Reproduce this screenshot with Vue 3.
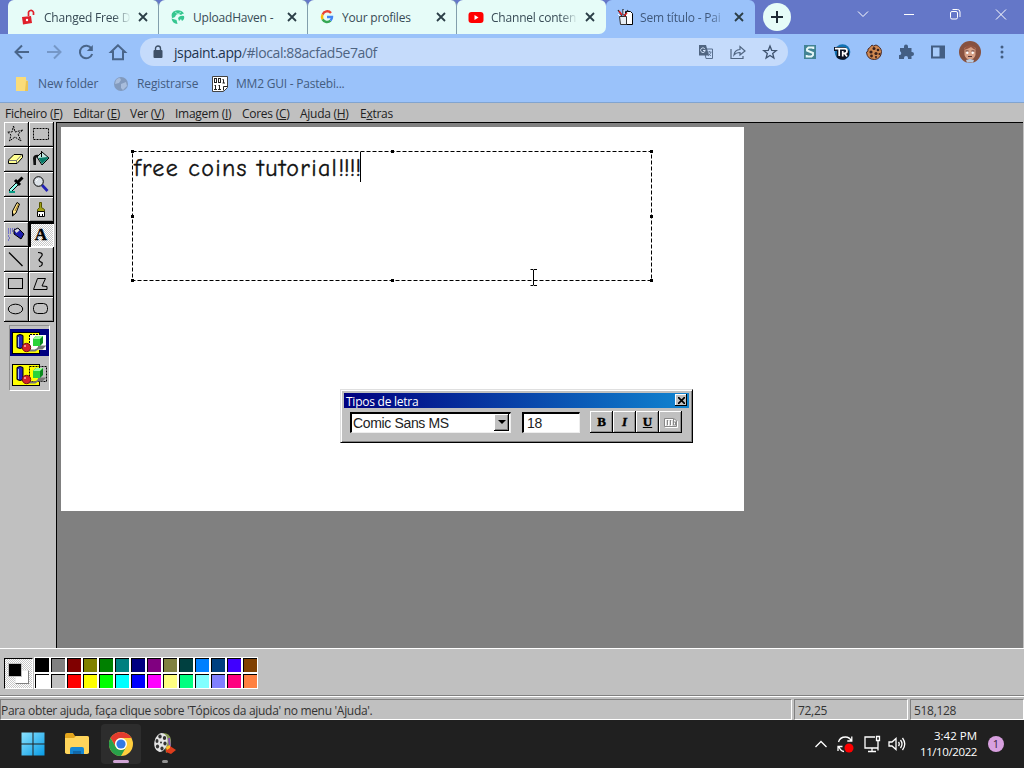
<template>
    <div class="desktop">
        <div class="tabstrip">
            <div class="tabs">
                <div v-for="(tab, i) in tabs" :key="tab.title" class="tab"
                    :class="{ active: i === 4, first: i === 0, last: i === 3 }">
                    <svg class="favicon" viewBox="0 0 16 16" v-html="tab.icon"></svg>
                    <span class="tab-title" :class="{ fade: tab.fade }">{{ tab.title }}</span>
                    <svg class="tab-close" viewBox="0 0 10 10">
                        <path d="M1 1l8 8M9 1L1 9" />
                    </svg>
                </div>
            </div>
            <button class="new-tab">
                <svg width="14" height="14" viewBox="0 0 14 14">
                    <path d="M7 1v12M1 7h12" stroke="#1d2b35" stroke-width="2" />
                </svg>
            </button>
            <div class="window-buttons">
                <svg viewBox="0 0 46 28"><path d="M18 11.5l5 5 5-5" /></svg>
                <svg viewBox="0 0 46 28"><path d="M18 14.5h10" /></svg>
                <svg viewBox="0 0 46 28">
                    <rect x="18.5" y="11.5" width="7" height="7.5" rx="1.5" />
                    <path d="M20.5 9.5h5q2.500 0 2.500 2.500v5" />
                </svg>
                <svg viewBox="0 0 46 28"><path d="M18 9.500l10 10M28 9.500l-10 10" /></svg>
            </div>
        </div>

        <div class="toolbar">
            <div class="nav">
                <svg viewBox="0 0 20 20"><path d="M17 10H4M10 3.500L3.500 10l6.500 6.500" /></svg>
                <svg class="dim" viewBox="0 0 20 20"><path d="M3 10h13M10 3.500l6.500 6.500-6.500 6.500" /></svg>
                <svg viewBox="0 0 20 20">
                    <path d="M15.500 6.500A6.300 6.300 0 1 0 16.200 12" />
                    <path d="M16.800 3v6h-6z" fill="#49658a" stroke="none" />
                </svg>
                <svg viewBox="0 0 20 20"><path d="M10 3.300L3 10h2v7.200h10V10h2z" stroke-linejoin="miter" /></svg>
            </div>
            <div class="address">
                <svg class="lock" viewBox="0 0 10 14">
                    <rect x="0.500" y="5" width="9" height="8" rx="1" fill="#3e5067" />
                    <path d="M2.500 5V3.500a2.500 2.500 0 0 1 5 0V5" fill="none" stroke="#3e5067" stroke-width="1.400" />
                </svg>
                <span class="url"><b>jspaint.app</b>/#local:88acfad5e7a0f</span>
                <svg class="addr-icon" viewBox="0 0 16 16">
                    <path d="M6 5h8.500v9.500H8z" fill="none" stroke="#596f8e" />
                    <path d="M1 1h7l3 10.500H1z" fill="#506581" />
                    <path d="M7 5.200A2.300 2.300 0 1 0 7.200 6.500H5" fill="none" stroke="#d7e6fc" />
                    <path d="M9.500 8h4M11.500 7v1M13 8q-.5 2.500-3 4M10.500 9.500l2.500 2.500" fill="none" stroke="#596f8e" stroke-width=".8" />
                </svg>
                <svg class="addr-icon" viewBox="0 0 16 16">
                    <path d="M1 5v9.500h12V12M4 11q.5-5 6-5.500V2.500l5 4.500-5 4V8.500Q6 8.500 4 11z" fill="none" stroke="#506581" stroke-width="1.200" />
                </svg>
                <svg class="addr-icon" viewBox="0 0 16 16">
                    <path d="M8 2l1.700 4.300 4.600.3-3.600 2.900 1.200 4.500L8 11.500 4.100 14l1.200-4.500-3.600-2.900 4.600-.3z" fill="none" stroke="#3f536f" stroke-width="1.300" />
                </svg>
            </div>
            <div class="extensions">
                <svg viewBox="0 0 18 18">
                    <rect x="3" y="2" width="12" height="14" fill="#428394" />
                    <path d="M12.300 6V4.500H7.500L6 6v1.500L12 10v2l-1.500 1.500H5.700V12" fill="none" stroke="#e7f7f7" stroke-width="1.900" />
                </svg>
                <svg viewBox="0 0 18 18">
                    <circle cx="9.500" cy="9" r="7.800" fill="#1272b4" />
                    <path d="M1 4h11l4 4v5l-4 3.500Q6 17.500 3.500 14L4 8H1z" fill="#0d1424" />
                    <path d="M2 5.700h9.500q2.500 0 2.500 2.300t-2.500 2.300H10M6.200 6v7M9.700 8v5.500M11.500 10.300l2.500 3.200" fill="none" stroke="#fff" stroke-width="1.700" />
                </svg>
                <svg viewBox="0 0 18 18">
                    <path d="M7 2q1 2 4 0 5 2 5.500 6.500Q16 16 9.500 16.500 2 16.500 1.500 9q2 0 1.500-3 2-1 4-4z" fill="#cf8850" stroke="#4b2922" />
                    <g fill="#3a211e"><circle cx="9" cy="5.500" r="1.500" /><circle cx="13" cy="7" r="1.300" /><circle cx="6" cy="9" r="1.600" /><circle cx="11" cy="10.500" r="1.600" /><circle cx="6.500" cy="13" r="1.400" /><circle cx="11" cy="14" r="1.100" /><circle cx="14.500" cy="11" r="1.100" /></g>
                </svg>
                <svg viewBox="0 0 18 18">
                    <path d="M3 5h4V3.500a2 2 0 0 1 4 0V5h3.500v4h.5a2 2 0 0 1 0 4h-.5v3H11v-1a2 2 0 0 0-4 0v1H2v-4h1a2 2 0 0 0 0-3.700z" fill="#435e83" />
                </svg>
                <svg viewBox="0 0 18 18">
                    <path d="M2 2.500h14v13H2z" fill="#435e83" /><path d="M4 4.500h6.500v9H4z" fill="#a7cbfa" />
                </svg>
                <svg class="avatar" viewBox="0 0 22 22">
                    <circle cx="11" cy="11" r="11" fill="#87513f" />
                    <path d="M5.500 7q5.500-4 11 0v7q-1 4-5.500 5-4.500-1-5.500-5z" fill="#d7a187" />
                    <path d="M5 9q1-4 6-5 5 1 6 5-3-1-5-3-3 2-7 3z" fill="#965540" />
                    <path d="M6.500 10h3M12.500 10h3M9 15.500h4" stroke="#523132" /><circle cx="8.300" cy="11.700" r="1.200" fill="#fff" /><circle cx="13.700" cy="11.700" r="1.200" fill="#fff" />
                    <path d="M7 19l4-1 4 1-1 2.500H8z" fill="#b7cce4" />
                </svg>
                <svg viewBox="0 0 18 18"><g fill="#435e83"><circle cx="9" cy="4" r="1.500" /><circle cx="9" cy="9" r="1.500" /><circle cx="9" cy="14" r="1.500" /></g></svg>
            </div>
        </div>

        <div class="bookmarks">
            <div class="bookmark b1">
                <svg viewBox="0 0 16 16"><path d="M2 1h10v3l2 1v10H2z" fill="#fadc79" /><path d="M12 5h2v10h-3z" fill="#eac354" /></svg>
                <span>New folder</span>
            </div>
            <div class="bookmark b2">
                <svg viewBox="0 0 16 16"><circle cx="8" cy="8" r="7" fill="#829abd" /><path d="M3 4q4-4 5 0l-2 3-4 1zM8 8l5-2 1 4-4 4-2-2z" fill="#a8bddc" /></svg>
                <span>Registrarse</span>
            </div>
            <div class="bookmark b3">
                <svg viewBox="0 0 16 16">
                    <path d="M.5.500h15v11l-4 4H.5z" fill="#fff" stroke="#444" />
                    <g fill="none" stroke="#222"><rect x="2.500" y="2.500" width="2" height="4" /><rect x="6.500" y="2.500" width="2" height="4" /><path d="M10.500 3.500h1v3.500M3.500 9v4.500M7.500 9v4.500M2.500 9.500h1M6.500 9.500h1M2 13.500h3M6 13.500h3M10.500 7h2.500M11.500 14.500v-4h4" /></g>
                </svg>
                <span>MM2 GUI - Pastebi...</span>
            </div>
        </div>

        <div class="menubar">
            <span v-for="m in menus" :key="m[1] + m[0]" :class="m[3]">{{ m[0] }}<u>{{ m[1] }}</u>{{ m[2] }}</span>
        </div>

        <div class="workspace">
            <div class="toolbox">
                <div class="tools">
                    <div v-for="(tool, i) in tools" :key="i" class="tool" :class="{ selected: i === 9 }">
                        <svg width="25" height="25" viewBox="0 0 25 25" v-html="tool"></svg>
                    </div>
                </div>
                <div class="options">
                    <div v-for="n in 2" :key="n" class="option" :class="{ chosen: n === 1 }">
                        <svg width="39" height="27" viewBox="0 0 39 27">
                            <rect x="2.500" y="3.500" width="27" height="21" fill="#ff0" stroke="#000" />
                            <rect v-if="n === 1" x="20" y="6" width="16" height="15" fill="#fff" />
                            <path d="M19.500 5.500h17v15h-17z" fill="none" stroke="#000" stroke-dasharray="2 1" v-if="n === 2" />
                            <path d="M19.500 20V5.500H29" fill="none" stroke="#000" stroke-dasharray="2 1" v-else />
                            <path d="M7 6.500q3-2 6 0v12q-3 2-6 0z" fill="#22b" stroke="#000" /><path d="M8.500 8v10" stroke="#9bf" />
                            <path d="M17 21.500h8l3-2M28 17.500h6l-2 2h-5" fill="none" stroke="#777" stroke-width="2" />
                            <circle cx="16.500" cy="18.500" r="4.200" fill="#d3222b" stroke="#711" /><circle cx="15" cy="17" r="1" fill="#fbb" />
                            <path d="M23 10l3-3h7v7l-3 3h-7z" fill="#098b1e" /><path d="M23 10h7v7h-7z" fill="#2bd33a" />
                            <path d="M23 10l3-3h7l-3 3z" fill="#9f9" />
                        </svg>
                    </div>
                </div>
            </div>
            <div class="canvas-area">
                <div class="canvas">
                    <div class="textbox">
                        <svg width="521" height="131" viewBox="0 0 521 131">
                            <rect x=".5" y=".5" width="519" height="129" fill="none" stroke="#000" stroke-dasharray="4 2" />
                            <rect v-for="(h, i) in handles" :key="i" :x="h[0]" :y="h[1]" width="3" height="3" />
                        </svg>
                        <span class="typed">free coins tutorial<span class="bangs">!!!!</span></span>
                        <i class="caret"></i>
                    </div>
                    <svg class="pointer" width="8" height="17" viewBox="0 0 8 17">
                        <path d="M.5.500h2.500l.5 1 .5-1H7M3.500 1v15M.5 16.500H3l.5-1 .5 1h3" fill="none" stroke="#000" />
                    </svg>
                </div>
                <div class="font-window">
                    <div class="titlebar">
                        <span>Tipos de letra</span>
                        <button><svg width="7" height="7" viewBox="0 0 7 7"><path d="M0 0l7 7M7 0L0 7" stroke="#000" stroke-width="1.700" /></svg></button>
                    </div>
                    <div class="font-row">
                        <div class="field family"><span>Comic Sans MS</span>
                            <i class="drop"><svg width="8" height="4" viewBox="0 0 8 4"><path d="M0 0h8L4 4z" /></svg></i>
                        </div>
                        <div class="field size">18</div>
                        <div class="styles">
                            <button><b>B</b></button>
                            <button><b class="ital">I</b></button>
                            <button><b class="under">U</b></button>
                            <button><svg width="15" height="11" viewBox="0 0 15 11"><path d="M1.500 9.500v-8h9l3 2v6zM4.500 3v5M7.500 3v5M10.500 2v6h2V5h-2" fill="#ddd" stroke="#fff" transform="translate(1 1)" /><path d="M1.500 9.500v-8h9l3 2v6zM4.500 3v5M7.500 3v5M10.500 2v6h2V5h-2" fill="none" stroke="#888" /></svg></button>
                        </div>
                    </div>
                </div>
            </div>
        </div>

        <div class="colorbar">
            <div class="current"><i class="back"></i><i class="fore"></i></div>
            <div class="palette">
                <i v-for="c in colors" :key="c" class="swatch" :style="{ backgroundColor: c }"></i>
            </div>
        </div>

        <div class="status">
            <div class="help"><span>Para obter ajuda, faça clique sobre 'Tópicos da ajuda' no menu 'Ajuda'.</span></div>
            <div class="pos">72,25</div>
            <div class="dims">518,128</div>
        </div>

        <div class="taskbar">
            <div class="pins">
                <div class="pin">
                    <svg width="24" height="24" viewBox="0 0 24 24">
                        <defs><linearGradient id="win" x2="1" y2="1"><stop stop-color="#8be2ff" /><stop offset="1" stop-color="#079be5" /></linearGradient></defs>
                        <path d="M.5.500h11v11H.5zM12.500.500h11v11h-11zM.5 12.500h11v11H.5zM12.500 12.500h11v11h-11z" fill="url(#win)" />
                    </svg>
                </div>
                <div class="pin">
                    <svg width="26" height="24" viewBox="0 0 26 24">
                        <path d="M1 3q0-2 2-2h6l2 3h12q2 0 2 2v15H1z" fill="#e3a51c" /><path d="M1 6h9l2-2h11q2 0 2 2v14q0 2-2 2H3q-2 0-2-2z" fill="#ffd55b" />
                        <path d="M6 22v-5q0-2 2-2h10q2 0 2 2v5z" fill="#1587d3" /><path d="M9 19h8v3H9z" fill="#1268a8" />
                    </svg>
                </div>
                <div class="pin running">
                    <svg width="24" height="24" viewBox="0 0 24 24">
                        <circle cx="12" cy="12" r="12" fill="#ffce3d" />
                        <path d="M1.600 6A12 12 0 0 1 22.400 6H12a6 6 0 0 0-5.200 9z" fill="#e33b2e" />
                        <path d="M1.600 6A12 12 0 0 0 12 24l5.200-9A6 6 0 0 1 6.800 15z" fill="#28a04a" />
                        <circle cx="12" cy="12" r="6" fill="#fff" /><circle cx="12" cy="12" r="4.600" fill="#3379e5" />
                    </svg>
                    <i class="mark"></i>
                </div>
                <div class="pin">
                    <svg width="24" height="24" viewBox="0 0 24 24">
                        <path d="M10 1q7 0 8 7v9l-5 4z" fill="#899c55" /><path d="M16 6l1 10" stroke="#8652b6" stroke-width="2" />
                        <ellipse cx="8" cy="10.500" rx="6.500" ry="9.500" fill="#e5e5e5" transform="rotate(12 8 10)" />
                        <g fill="#333"><ellipse cx="7" cy="4.500" rx="1.700" ry="2" /><ellipse cx="11.500" cy="6" rx="1.700" ry="2" /><ellipse cx="4" cy="9" rx="1.500" ry="2" /><ellipse cx="12" cy="11.500" rx="1.600" ry="2" /><ellipse cx="4.500" cy="14.500" rx="1.600" ry="2" /><ellipse cx="9" cy="16.500" rx="1.600" ry="2" /><circle cx="8" cy="10.500" r="1" /></g>
                        <path d="M13 17l4-3 6 4-5 4-5-2z" fill="#df3d1c" /><path d="M13 15l4-2v3l-3 2z" fill="#ffbd29" />
                    </svg>
                    <i class="mark small"></i>
                </div>
            </div>
            <div class="tray">
                <svg width="14" height="24" viewBox="0 0 14 24"><path d="M1.500 15L7 9.500l5.500 5.500" /></svg>
                <svg width="17" height="18" viewBox="0 0 17 18">
                    <path d="M1.500 7Q3 2 8.500 2q4 0 6 4M14.800 1.500V6h-4.500M1 16v-4.500h4.500M2 12q2 4.500 5 4.500" />
                    <circle cx="12" cy="13" r="4.500" fill="#f00" stroke="none" />
                </svg>
                <svg width="17" height="18" viewBox="0 0 17 18"><path d="M11 2H1v11h12.500M8 13v3M4 16.500h8M12.500 1.500h3v4h-3zM14 5.500v10" /></svg>
                <svg width="18" height="18" viewBox="0 0 18 18"><path d="M1 7v4h3l4 3.500v-11L4 7zM10.500 7q1.500 2 0 4M12.500 5q3 4 0 8M14.500 3q4.500 6 0 12" /></svg>
                <div class="clock"><span class="time">3:42 PM</span><span>11/10/2022</span></div>
                <div class="badge">1</div>
            </div>
        </div>
    </div>
</template>

<script setup>
const tabs = [
    {
        title: 'Changed Free D', fade: true,
        icon: '<path d="M1 8l9-1 1 7-9 1.500z" fill="#e0202b"/><path d="M7.500 7V4.500a2.500 2.500 0 0 1 5-1V6" fill="none" stroke="#e0202b" stroke-width="1.700"/><circle cx="6" cy="11" r="1.200" fill="#fff"/>',
    },
    {
        title: 'UploadHaven -',
        icon: '<path d="M2 9Q0 3 6 1.500q5-1 8 3-2 0-3 1.500-3-2-5 0-1 3-4 3zM1.500 9.500q1 5 6 5.500l-1-4zM8 9q2-3 6-2 1 3-2 5l-1-2-2 2zM9 14l3-1" fill="#35c690"/><path d="M5 3l3 2 3-2" fill="none" stroke="#96edcb"/>',
    },
    {
        title: 'Your profiles',
        icon: '<g fill="none" stroke-width="2.400"><path d="M12 4A5 5 0 0 0 3.600 5.600" stroke="#e94235"/><path d="M3.600 5.600a5 5 0 0 0 0 4.800" stroke="#fabb05"/><path d="M3.600 10.400A5 5 0 0 0 11.500 11.600" stroke="#34a853"/><path d="M11.500 11.600A5 5 0 0 0 13 8H8" stroke="#4285f4"/></g>',
    },
    {
        title: 'Channel conten', fade: true,
        icon: '<rect x=".5" y="3" width="15" height="11" rx="3" fill="#f00"/><path d="M6.500 6l4 2.500-4 2.500z" fill="#fff"/>',
    },
    {
        title: 'Sem título - Pai', fade: true,
        icon: '<path d="M8.500 2.500h5l2 2v11h-7z" fill="#fff" stroke="#000"/><path d="M2.500 7.500h7v8h-6z" fill="#e8eef4" stroke="#333"/><path d="M1 1l4 6M6 0v6M11 1L7 7" stroke="#222" stroke-width="1.200"/><path d="M2 2l3 4M10 4L7 7" fill="none" stroke="#d22" stroke-width="1.500"/><path d="M7 1v4M1 5l2 2" stroke="#fff"/>',
    },
]

const menus = [
    ['Ficheiro (', 'F', ')', 'm1'],
    ['Editar (', 'E', ')', 'm2'],
    ['Ver (', 'V', ')', 'm3'],
    ['Imagem (', 'I', ')', 'm4'],
    ['Cores (', 'C', ')', 'm5'],
    ['Ajuda (', 'H', ')', 'm6'],
    ['E', 'x', 'tras', 'm7'],
]

const line = 'fill="none" stroke="#000"'

// two columns, top to bottom
const tools = [
    `<path d="M9.500 4l1.500 6 8-2-5 4 3 7-6-4-5.500 4L7 13l-3.500-3H8z" ${line} stroke-dasharray="2 1"/>`,
    `<rect x="4.500" y="6.500" width="15" height="11" ${line} stroke-dasharray="2 1"/>`,
    '<path d="M4.500 13l5.500-5.500h8.500v3L13 16.500H4.500z" fill="#ffff91" stroke="#000"/><path d="M4.500 13.500h8l5.500-6M12.500 13v3" fill="none" stroke="#777"/>',
    '<path d="M8 10l5-5 7 6-7 7z" fill="#bfe5df" stroke="#000"/><path d="M9.500 11l9-1 1 1-6.500 6z" fill="#087b68"/><path d="M12.500 4v6" stroke="#000"/><path d="M4 11q1-4 6-3l-3 3v7H4.500z" fill="#111"/>',
    '<path d="M5.500 19.500v-2l7-7 2 2-7 7z" fill="#91fff0" stroke="#000"/><path d="M11 8l5 5M13.500 10.500l5-5" stroke="#000" stroke-width="3"/><path d="M5 20h6" stroke="#079b83" stroke-width="2"/>',
    '<path d="M13 13l5.500 6" stroke="#2222b5" stroke-width="2.700"/><circle cx="9.500" cy="9.500" r="4.800" fill="#dce2e8" stroke="#000"/><path d="M7 9l2-2" stroke="#fff"/>',
    '<path d="M8.500 14L13 5.500l2.500 1.500-3.500 9-3.500 3z" fill="#ffe58d" stroke="#000"/><path d="M8.500 16l1.500 1-1.500 2z" fill="#000"/><path d="M11 14l3.500-7" stroke="#9d7926"/>',
    '<path d="M10.500 5.500h2v5l3 2v2h-7v-2l2-2z" fill="#a0a018" stroke="#555500"/><path d="M8.500 14.500h7v5h-7z" fill="#fff" stroke="#000"/><path d="M10.500 17v2M13.500 17v2" stroke="#000"/>',
    '<path d="M4 7h7M4 9h6M4 11h3M4 14h2M5 16h1M4 18h1" stroke="#2525d0" stroke-dasharray="1 1"/><path d="M10 8l4-2 6 6-3 5-7-5z" fill="#1d1dac" stroke="#000"/><path d="M10.500 8.500l3.500-2 1.500 2-3 2.500z" fill="#ddd"/>',
    '<text x="12" y="18" text-anchor="middle" font-family="Liberation Serif, serif" font-size="17" font-weight="700" stroke="#000" stroke-width=".4">A</text>',
    `<path d="M5 5.500L18.500 19" ${line} stroke-width="1.300"/>`,
    `<path d="M9 5.500q5 0 4 3-1 1.500-3 4 0 2 3 3 1 3.500-3 4" ${line} stroke-width="1.200"/>`,
    `<rect x="4.500" y="6.500" width="14" height="10" ${line}/>`,
    `<path d="M8.500 6.500h8L13 14l5 .5v3H4.500z" ${line}/>`,
    `<ellipse cx="11.500" cy="12" rx="7.200" ry="4.800" ${line}/>`,
    `<rect x="4.500" y="6.500" width="14" height="10" rx="4" ${line}/>`,
]

const handles = [[-1, -1], [259, -1], [518, -1], [-1, 64], [518, 64], [-1, 128], [259, 128], [518, 128]]

const colors = [
    '#000000', '#808080', '#800000', '#808000', '#008000', '#008080', '#000080',
    '#800080', '#808040', '#004040', '#0080ff', '#004080', '#4000ff', '#804000',
    '#ffffff', '#c0c0c0', '#ff0000', '#ffff00', '#00ff00', '#00ffff', '#0000ff',
    '#ff00ff', '#ffff80', '#00ff80', '#80ffff', '#8080ff', '#ff0080', '#ff8040',
]
</script>

<style>
body {
    margin: 0;
    overflow: hidden;
}
</style>

<style scoped>
* {
    box-sizing: border-box;
}

.desktop {
    width: 1024px;
    height: 768px;
    display: flex;
    flex-direction: column;
    font-family: "Open Sans", "Noto Sans", sans-serif;
    font-size: 12px;
    white-space: nowrap;
    background: #c0c0c0;
}

button {
    padding: 0;
    border: 0;
}

.tabstrip {
    height: 34px;
    display: flex;
    background: #6477c8;
    padding-left: 10px;
    flex: none;
}

.tabs {
    display: flex;
}

.tab {
    width: 149px;
    height: 34px;
    display: flex;
    align-items: center;
    padding-left: 11px;
    background: #e6fcf8;
    border-radius: 6px 6px 0 0;
    border-right: 1px solid #829fac;
    color: #384b56;
}

.tab.first {
    box-shadow: -2px 0 #e6fcf8;
}

.tab.last {
    border-right: 0;
    border-bottom-right-radius: 7px;
    box-shadow: 5px 8px #9ac2fa;
}

.tab.active {
    background: #9ac2fa;
    border-right: 0;
    color: #40597c;
}

.favicon {
    width: 16px;
    height: 16px;
    margin-right: 7px;
    flex: none;
}

.tab-title {
    width: 87px;
    overflow: hidden;
    letter-spacing: -.2px;
}

.fade {
    mask-image: linear-gradient(90deg, #000 80%, transparent);
}

.tab-close {
    width: 10px;
    height: 10px;
    margin-left: 7px;
    flex: none;
    stroke: #2b3e47;
    stroke-width: 1.8;
}

.new-tab {
    width: 28px;
    height: 28px;
    border-radius: 50%;
    background: #e6fcf8;
    margin: 3px 0 0 8px;
    display: flex;
    align-items: center;
    justify-content: center;
}

.window-buttons {
    display: flex;
    margin-left: auto;
}

.window-buttons svg {
    width: 46px;
    height: 28px;
    fill: none;
    stroke: #fff;
}

.toolbar {
    height: 35px;
    background: #9ac2fa;
    display: flex;
    align-items: center;
    padding: 1px 0 0 12px;
    flex: none;
}

.nav {
    display: flex;
    gap: 12px;
    width: 128px;
}

.nav svg {
    width: 20px;
    height: 20px;
    flex: none;
    fill: none;
    stroke: #49658a;
    stroke-width: 2;
}

.nav .dim {
    opacity: .45;
}

.address {
    width: 648px;
    height: 28px;
    border-radius: 14px;
    background: #c5dbfb;
    display: flex;
    align-items: center;
    padding: 0 10px 0 13px;
    gap: 16px;
}

.lock {
    width: 10px;
    height: 14px;
}

.url {
    flex: 1;
    margin-left: -5px;
    font-size: 14px;
    letter-spacing: -.41px;
    color: #4e6482;
}

.url b {
    font-weight: 400;
    color: #22344e;
}

.addr-icon {
    width: 16px;
    height: 16px;
}

.extensions {
    display: flex;
    align-items: center;
    gap: 14px;
    margin-left: 13px;
}

.extensions svg {
    width: 18px;
    height: 18px;
    flex: none;
}

.extensions .avatar {
    width: 22px;
    height: 22px;
    margin: 0 -2px;
}

.bookmarks {
    height: 34px;
    background: #9ac2fa;
    border-bottom: 1px solid #81a4d0;
    display: flex;
    align-items: center;
    padding: 0 0 4px 14px;
    color: #435c80;
    letter-spacing: -.22px;
    flex: none;
}

.bookmark {
    display: flex;
    align-items: center;
    gap: 8px;
}

.bookmark svg {
    width: 16px;
    height: 16px;
}

.b1 {
    width: 99px;
}

.b2 {
    width: 99px;
}

.b1 span,
.b2 span {
    letter-spacing: -.12px;
}

.menubar {
    height: 19px;
    display: flex;
    line-height: 21px;
    padding-left: 5px;
    color: #222;
    letter-spacing: -.27px;
    flex: none;
}

.menubar u {
    text-underline-offset: 1px;
}

.m1 { width: 68px; }
.m2 { width: 57px; }
.m3 { width: 45px; }
.m4 { width: 67px; }
.m5 { width: 58px; }
.m6 { width: 60px; }

.workspace {
    height: 526px;
    display: flex;
    flex: none;
}

.toolbox {
    width: 57px;
    border-right: 1px solid #000;
    padding-left: 4px;
}

.tools {
    width: 50px;
    display: grid;
    grid-template-columns: 25px 25px;
}

.tool {
    height: 25px;
    box-shadow: inset -1px -1px #000, inset 1px 1px #fff, inset -2px -2px #909090;
}

.tool svg {
    display: block;
}

.tool.selected {
    background: repeating-conic-gradient(#fff 0 25%, #c8c8c8 0 50%) 0 0 / 2px 2px;
    box-shadow: inset 2px 2px #000, inset -1px -1px #fff;
}

.options {
    width: 41px;
    height: 66px;
    margin: 3px 0 0 5px;
    padding-top: 3px;
    border: 1px solid #909090;
    border-right-color: #fff;
    border-bottom-color: #fff;
}

.option {
    height: 27px;
    margin-bottom: 5px;
}

.option svg {
    display: block;
}

.chosen {
    background: #000080;
}

.canvas-area {
    position: relative;
    width: 966px;
    padding: 4px 0 0 4px;
    background: #808080;
    border-top: 1px solid #000;
}

.canvas {
    position: relative;
    width: 683px;
    height: 384px;
    background: #fff;
}

.textbox {
    position: absolute;
    left: 71px;
    top: 24px;
    width: 521px;
    height: 131px;
}

.textbox svg {
    position: absolute;
    overflow: visible;
}

.typed {
    position: absolute;
    left: 2px;
    top: 1px;
    font-family: "Comic Sans MS", "Comic Neue", "Open Sans", sans-serif;
    font-size: 24px;
    line-height: 32px;
    letter-spacing: 1.3px;
    -webkit-text-stroke: .35px #111;
    color: #111;
}

.bangs {
    letter-spacing: -.2px;
}

.caret {
    position: absolute;
    left: 228px;
    top: 1px;
    width: 1px;
    height: 30px;
    background: #000;
}

.pointer {
    position: absolute;
    left: 469px;
    top: 142px;
}

.font-window {
    position: absolute;
    left: 283px;
    top: 266px;
    width: 353px;
    height: 54px;
    padding: 3px;
    background: #c0c0c0;
    border: 1px solid #dfdfdf;
    border-right-color: #000;
    border-bottom-color: #000;
    box-shadow: inset 1px 1px #fff, inset -1px -1px #808080;
}

.titlebar {
    height: 15px;
    display: flex;
    justify-content: space-between;
    background: linear-gradient(90deg, #000080, #1084d0);
    color: #fff;
    line-height: 18px;
    letter-spacing: -.25px;
    padding-left: 2px;
    overflow: hidden;
}

.titlebar button {
    width: 12px;
    height: 12px;
    margin: 1px 2px 0 0;
    display: flex;
    align-items: center;
    justify-content: center;
    background: #c0c0c0;
    box-shadow: inset -1px -1px #000, inset 1px 1px #fff;
}

.font-row {
    display: flex;
    padding: 3px 0 0 6px;
    align-items: center;
}

.field {
    height: 21px;
    background: #fff;
    border: 1px solid #000;
    border-width: 2px 1px 1px 2px;
    border-right-color: #eee;
    border-bottom-color: #eee;
    font: 14px/18px "Liberation Sans", Arial, sans-serif;
    letter-spacing: -.35px;
    color: #222;
}

.family {
    width: 161px;
    display: flex;
    justify-content: space-between;
    padding: 0 1px;
}

.drop {
    width: 15px;
    height: 17px;
    display: flex;
    align-items: center;
    justify-content: center;
    background: #c0c0c0;
    box-shadow: inset -1px -1px #000, inset 1px 1px #fff, inset -2px -2px #808080;
}

.size {
    width: 58px;
    margin-left: 11px;
    padding-left: 3px;
}

.styles {
    display: flex;
    margin-left: 10px;
}

.styles button {
    width: 23px;
    height: 22px;
    display: flex;
    align-items: center;
    justify-content: center;
    background: #c0c0c0;
    box-shadow: inset -1px -1px #000, inset 1px 1px #fff, inset -2px -2px #909090;
    font: bold 13px "Liberation Serif", serif;
    -webkit-text-stroke: .4px #000;
    color: #000;
}

.ital {
    font-style: italic;
}

.under {
    text-decoration: underline;
}

.colorbar {
    height: 48px;
    border-top: 1px solid #fff;
    border-bottom: 1px solid #808080;
    display: flex;
    padding: 9px 0 0 4px;
    flex: none;
}

.current {
    position: relative;
    width: 29px;
    height: 31px;
    border: 1px solid #000;
    border-right-color: #fff;
    border-bottom-color: #fff;
    background: repeating-conic-gradient(#fff 0 25%, #c8c8c8 0 50%) 0 0 / 2px 2px;
}

.current i {
    position: absolute;
    width: 14px;
    height: 14px;
    border: 1px solid #eee;
    border-right-color: #808080;
    border-bottom-color: #808080;
}

.fore {
    left: 3px;
    top: 4px;
    background: #000;
    outline: 1px solid #c0c0c0;
    outline-offset: -1px;
}

.back {
    left: 10px;
    top: 11px;
    background: #fff;
}

.palette {
    display: grid;
    grid-template-columns: repeat(14, 16px);
    grid-auto-rows: 16px;
    margin: -1px 0 0 1px;
}

.swatch {
    border: 1px solid #fff;
    box-shadow: inset 1px 1px #000;
}

.status {
    height: 24px;
    display: flex;
    border-top: 1px solid #fff;
    padding-top: 2px;
    gap: 2px;
    line-height: 22px;
    letter-spacing: -.31px;
    color: #333;
    flex: none;
}

.status div {
    height: 21px;
    border: 1px solid #808080;
    border-right-color: #fff;
    border-bottom-color: #fff;
}

.help {
    width: 792px;
}

.pos {
    width: 114px;
    padding-left: 3px;
}

.dims {
    width: 114px;
    padding-left: 3px;
}

.taskbar {
    height: 48px;
    background: #202020;
    display: flex;
    align-items: center;
    padding-left: 13px;
    flex: none;
}

.pins {
    display: flex;
    gap: 4px;
}

.pin {
    position: relative;
    width: 40px;
    height: 40px;
    display: flex;
    align-items: center;
    justify-content: center;
    border-radius: 4px;
}

.running {
    background: #2d2d2d;
}

.mark {
    position: absolute;
    bottom: 1px;
    width: 16px;
    height: 3px;
    border-radius: 2px;
    background: #d0a5d5;
}

.mark.small {
    width: 6px;
    background: #929292;
}

.tray {
    display: flex;
    align-items: center;
    margin: 0 20px 0 auto;
    color: #fff;
}

.tray svg {
    fill: none;
    stroke: #fff;
    stroke-width: 1.3;
    margin-right: 10px;
}

.tray svg:first-child {
    margin-right: 9px;
}

.tray svg:nth-child(3) {
    margin-right: 7px;
}

.tray svg:nth-child(4) {
    margin-right: 0;
}

.clock {
    width: 71px;
    display: flex;
    flex-direction: column;
    align-items: flex-end;
    font-size: 11.5px;
    line-height: 16px;
    letter-spacing: -.4px;
}

.time {
    letter-spacing: 0;
}

.badge {
    width: 16px;
    height: 16px;
    border-radius: 50%;
    margin-left: 11px;
    background: #d8a0df;
    color: #38223c;
    font-size: 11px;
    line-height: 16px;
    text-align: center;
}
</style>
